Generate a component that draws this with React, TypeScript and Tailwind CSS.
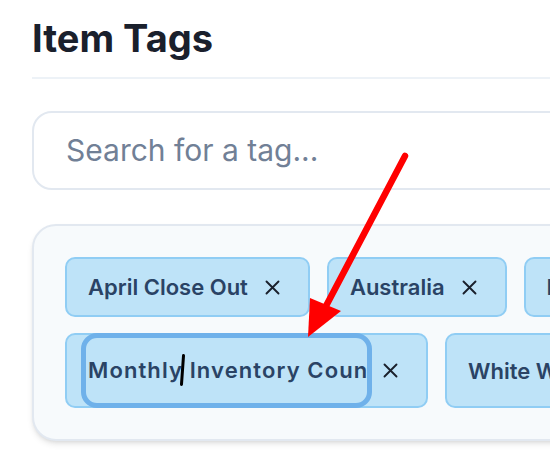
import React from 'react';

const tagsTop = ['April Close Out', 'Australia', 'Bulk Order'];

function CloseIcon() {
  return (
    <svg width="15" height="15" viewBox="0 0 15 15" className="shrink-0">
      <path d="M1.5 1.5 L13.5 13.5 M13.5 1.5 L1.5 13.5" stroke="#1a202c" strokeWidth="1.9" strokeLinecap="round" />
    </svg>
  );
}

function Tag({ label }: { label: string }) {
  return (
    <div className="flex items-center rounded-[10px] border-2 border-[#90cdf4] bg-[#bee3f8] pl-[21px] pr-[28px] py-[12px] whitespace-nowrap">
      <span className="text-[22px] leading-[32px] font-semibold text-[#2a4365]">{label}</span>
      <span className="ml-[17px] flex items-center">
        <CloseIcon />
      </span>
    </div>
  );
}

export default function App() {
  return (
    <div
      className="relative w-[550px] h-[474px] overflow-hidden bg-white"
      style={{ fontFamily: 'Inter, "Noto Sans", sans-serif' }}
    >
      <div className="w-[800px] pl-8 pt-[15px]">
        {/* Header */}
        <h1 className="text-[38px] leading-[46px] font-bold text-[#1a202c]">Item Tags</h1>
        <div className="mt-4 h-[2px] bg-[#edf2f7]" />

        {/* Search */}
        <div className="mt-8 h-[79px] flex items-center rounded-[20px] border-2 border-[#e2e8f0] pl-[32px]">
          <input
            className="w-full bg-transparent outline-none text-[30px] text-[#1a202c] placeholder:text-[#718096]"
            placeholder="Search for a tag..."
          />
        </div>

        {/* Tags */}
        <div className="mt-[34px] rounded-[24px] border-2 border-[#e2e8f0] bg-[#f7fafc] px-[31px] pt-[31px] pb-[31px] shadow-md">
          <div className="flex flex-wrap gap-x-[17px] gap-y-[16px]">
            {tagsTop.map((t) => (
              <Tag key={t} label={t} />
            ))}

            {/* tag being edited */}
            <div className="flex items-center rounded-[10px] border-2 border-[#90cdf4] bg-[#bee3f8] pl-[14px] pr-[28px]">
              <div className="relative -my-[2px] h-[75px] w-[291px] rounded-[16px] border-[5px] border-[#6fb1ea] pl-[2px] flex items-center">
                <input
                  readOnly
                  value="Monthly Inventory Count"
                  className="w-full bg-transparent outline-none text-[22px] font-semibold tracking-[0.05em] text-[#2a4365]"
                />
                <span className="absolute left-[95px] top-[16px] h-[32px] w-[3px] rounded-full bg-black rotate-[4deg]" />
              </div>
              <span className="ml-[11px] flex items-center">
                <CloseIcon />
              </span>
            </div>

            <Tag label="White Wine" />
          </div>
        </div>
      </div>

      {/* annotation arrow */}
      <svg className="absolute inset-0 pointer-events-none" width="550" height="474">
        <line x1="405" y1="156" x2="326" y2="306" stroke="#ff0000" strokeWidth="6.5" strokeLinecap="round" />
        <polygon points="308,337 310,298 341,311" fill="#ff0000" />
      </svg>
    </div>
  );
}
